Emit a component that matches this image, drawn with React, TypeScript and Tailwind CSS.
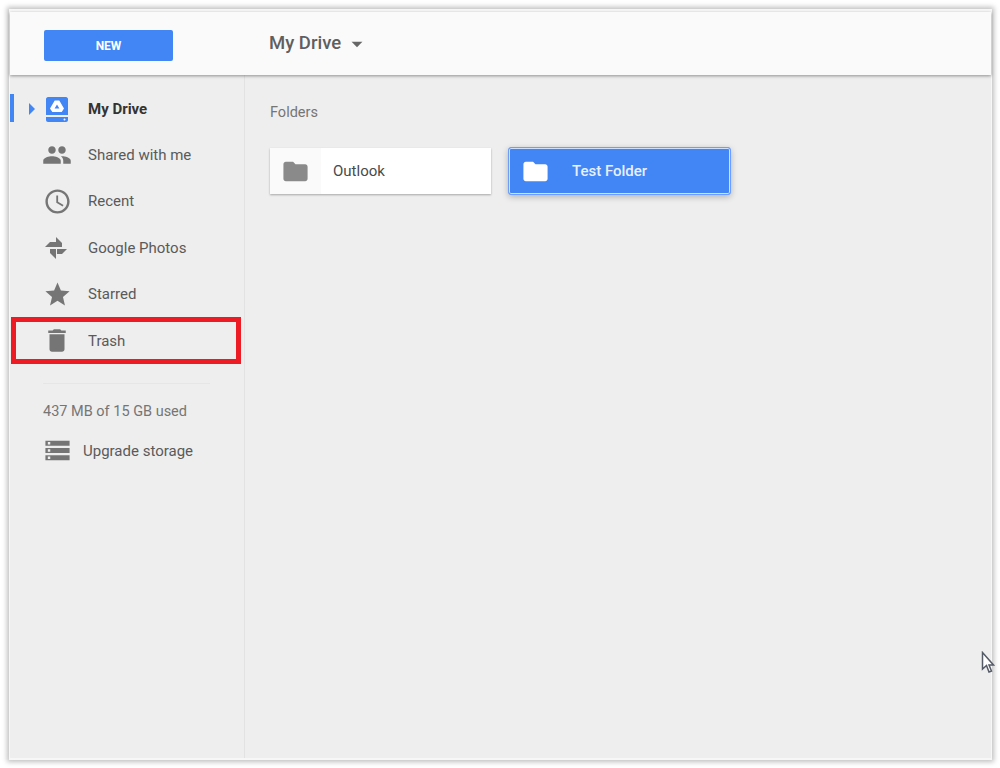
import { MdAccessTime, MdArrowDropDown, MdDelete, MdFolder, MdPeople, MdStar, MdStorage } from 'react-icons/md';

const DriveIcon = () => (
  <svg width="22" height="25" viewBox="0 0 22 25" className="text-[#4285f4]">
    <path d="M2 0H20C21 0 22 1 22 2V18H0V2C0 1 1 0 2 0Z" fill="currentColor" />
    <path d="M0 20H22V23C22 24 21 25 20 25H2C1 25 0 24 0 23V20Z" fill="currentColor" />
    <circle cx="18.5" cy="22.5" r="1" fill="#fff" />
    <path d="M8.7 3.5H13.3L18 11.5L15.7 15H6.3L4 11.5L8.7 3.5ZM11 7.4L8.6 11.5H13.4L11 7.4Z" fill="#fff" fillRule="evenodd" />
  </svg>
);

const PhotosIcon = () => (
  <svg width="24" height="24" viewBox="1 0 24 24" fill="#757575">
    <path d="M12 1L18 7V11H12V1Z" />
    <path d="M23 13L18 18H13V13H23Z" />
    <path d="M12 23L6 17V13H12V23Z" />
    <path d="M1 11L6 6H12V11H1Z" />
  </svg>
);

const navItems = [
  { label: 'Shared with me', icon: <MdPeople size={30} color="#757575" /> },
  { label: 'Recent', icon: <MdAccessTime size={29} color="#757575" /> },
  { label: 'Google Photos', icon: <PhotosIcon /> },
  { label: 'Starred', icon: <MdStar size={29} color="#757575" /> },
];

const App = () => {
  return (
    <div className="w-[1000px] h-[768px] bg-white pl-[9px] pr-[8px] pt-[9px] pb-[8px] overflow-hidden relative font-['Roboto',sans-serif]">
      <div className="h-full flex flex-col bg-[#eeeeee] border-t-[3px] border-x-[1px] border-b-[2px] border-[#f7f7f7] shadow-[0_0_5px_2px_rgba(0,0,0,0.25)]">
        {/* Top bar */}
        <header className="h-[63px] shrink-0 flex items-center bg-[#fafafa] shadow-[0_1px_3px_rgba(0,0,0,0.4)] relative">
          <div className="w-[259px] pl-[34px] mt-[4px] shrink-0">
            <button className="block w-[129px] h-[31px] bg-[#4285f4] rounded-[2px] text-white text-[12px] font-bold">NEW</button>
          </div>
          <div className="flex items-center text-[#5f5f5f] text-[18.5px] font-medium">
            <span>My Drive</span>
            <MdArrowDropDown size={26} color="#666666" className="ml-[3px]" />
          </div>
        </header>

        <div className="flex-1 flex min-h-0">
          {/* Sidebar */}
          <aside className="w-[235px] shrink-0 border-r border-[#e2e2e2] pt-[11px] text-[15px] text-[#5a5a5a]">
            <div className="h-[46px] flex items-center relative">
              <div className="absolute left-0 top-[8px] w-[4px] h-[28px] bg-[#4285f4]" />
              <div className="ml-[19px] w-0 h-0 border-y-[6px] border-y-transparent border-l-[6px] border-l-[#4285f4]" />
              <div className="ml-[11px] w-[22px] flex justify-center">
                <DriveIcon />
              </div>
              <span className="ml-[20px] font-bold text-[#333333]">My Drive</span>
            </div>
            {navItems.map((item, index) => (
              <div key={index} className="h-[46.4px] flex items-center">
                <div className="ml-[32px] w-[30px] flex justify-center">{item.icon}</div>
                <span className="ml-[16px]">{item.label}</span>
              </div>
            ))}
            <div className="h-[46.4px] flex items-center relative">
              <div className="ml-[32px] w-[30px] flex justify-center">
                <MdDelete size={31} color="#757575" />
              </div>
              <span className="ml-[16px]">Trash</span>
              {/* Red annotation box */}
              <div className="absolute left-[1px] right-[3px] -top-[1px] bottom-0 border-[5px] border-[#ed1c24]" />
            </div>

            <div className="ml-[33px] mr-[34px] mt-[19px] border-t border-[#e6e6e6]" />
            <div className="ml-[33px] mt-[19px] text-[14.5px] leading-[18px] text-[#757575]">437 MB of 15 GB used</div>
            <div className="mt-[15px] h-[30px] flex items-center">
              <div className="ml-[32px] w-[30px] flex justify-center">
                <MdStorage size={29} color="#757575" />
              </div>
              <span className="ml-[11px]">Upgrade storage</span>
            </div>
          </aside>

          {/* Folders */}
          <main className="flex-1 pl-[25px] pt-[28px]">
            <h2 className="text-[14.5px] leading-[20px] font-normal text-[#757575]">Folders</h2>
            <div className="mt-[24px] flex gap-[17px]">
              <div className="w-[221px] h-[46px] mt-[1px] flex items-center bg-white shadow-[0_1px_2px_rgba(0,0,0,0.3)]">
                <div className="w-[51px] h-full flex items-center justify-center bg-[#fafafa]">
                  <MdFolder size={29} color="#8a8a8a" />
                </div>
                <span className="ml-[12px] text-[15px] text-[#4a4a4a]">Outlook</span>
              </div>
              <div className="w-[223px] h-[48px] flex items-center bg-[#4285f4] border border-[#6f9ff5] rounded-[3px] shadow-[inset_0_0_0_1px_#cfe0fd,0_2px_6px_rgba(0,0,0,0.25)]">
                <div className="w-[52px] flex items-center justify-center">
                  <MdFolder size={29} color="#ffffff" />
                </div>
                <span className="ml-[11px] text-[15px] font-medium text-[#e8f0fe]">Test Folder</span>
              </div>
            </div>
          </main>
        </div>
      </div>

      {/* Mouse pointer */}
      <svg width="14" height="24" viewBox="0 0 14 24" className="absolute left-[981px] top-[651px]">
        <path d="M1.5 1.5V18L5.5 14.5L8 21L10.5 20L8 14H12.5L1.5 1.5Z" fill="#ffffff" stroke="#555b66" strokeWidth="1.5" />
      </svg>
    </div>
  );
};

export default App;
